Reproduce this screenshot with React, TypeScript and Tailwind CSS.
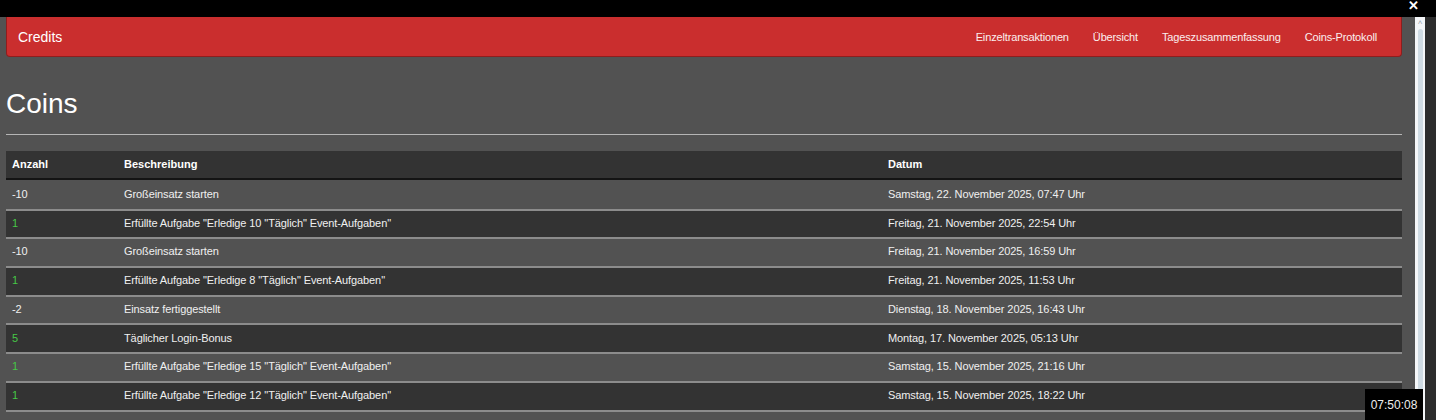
import React from "react";

const rows: { n: string; d: string; t: string }[] = [
  { n: "-10", d: "Großeinsatz starten", t: "Samstag, 22. November 2025, 07:47 Uhr" },
  { n: "1", d: 'Erfüllte Aufgabe "Erledige 10 "Täglich" Event-Aufgaben"', t: "Freitag, 21. November 2025, 22:54 Uhr" },
  { n: "-10", d: "Großeinsatz starten", t: "Freitag, 21. November 2025, 16:59 Uhr" },
  { n: "1", d: 'Erfüllte Aufgabe "Erledige 8 "Täglich" Event-Aufgaben"', t: "Freitag, 21. November 2025, 11:53 Uhr" },
  { n: "-2", d: "Einsatz fertiggestellt", t: "Dienstag, 18. November 2025, 16:43 Uhr" },
  { n: "5", d: "Täglicher Login-Bonus", t: "Montag, 17. November 2025, 05:13 Uhr" },
  { n: "1", d: 'Erfüllte Aufgabe "Erledige 15 "Täglich" Event-Aufgaben"', t: "Samstag, 15. November 2025, 21:16 Uhr" },
  { n: "1", d: 'Erfüllte Aufgabe "Erledige 12 "Täglich" Event-Aufgaben"', t: "Samstag, 15. November 2025, 18:22 Uhr" },
  { n: "1", d: 'Erfüllte Aufgabe "Erledige 10 "Täglich" Event-Aufgaben"', t: "Freitag, 14. November 2025, 17:04 Uhr" },
];

export default function App() {
  return (
    <div
      className="relative w-[1436px] h-[420px] overflow-hidden bg-black text-white"
      style={{ fontFamily: '"Liberation Sans", Arial, sans-serif' }}
    >
      <div className="h-[17px] bg-black flex justify-end pr-[17px]">
        <span className="text-[13px] leading-[11px] font-bold text-white">✕</span>
      </div>
      <div className="flex h-[403px]">
        <div className="w-[1415px] bg-[#525252] pl-[6px] pr-[13px] overflow-hidden">
          <div className="h-[40px] bg-[#ca2e2e] border border-t-0 border-[#8f1d1d] rounded-b-[4px] flex items-center justify-between pl-[11px] pr-[12px] pt-[1px]">
            <span className="text-[14px] text-white">Credits</span>
            <div className="flex text-[11px] tracking-[-0.15px] text-[#fbeeee]">
              <span className="px-[12px]">Einzeltransaktionen</span>
              <span className="px-[12px]">Übersicht</span>
              <span className="px-[12px]">Tageszusammenfassung</span>
              <span className="px-[12px]">Coins-Protokoll</span>
            </div>
          </div>
          <h1 className="mt-[31px] mb-[15px] text-[28px] leading-[31px] text-white">Coins</h1>
          <div className="h-px bg-[#b5b5b5]" />
          <div className="mt-[16px]">
            <div className="flex h-[29px] items-center bg-[#333333] border-b-2 border-[#141414] text-[11px] font-bold text-white">
              <div className="w-[118px] pl-[6px]">Anzahl</div>
              <div className="w-[764px]">Beschreibung</div>
              <div className="flex-1">Datum</div>
            </div>
            {rows.map((r, i) => (
              <div
                key={i}
                className={`flex h-[28.7px] items-center text-[11px] tracking-[-0.1px] text-[#f0f0f0] ${
                  i > 0 ? "border-t-2 border-[#8c8c8c] pb-[2px]" : ""
                } ${i % 2 === 1 ? "bg-[#333333]" : "bg-[#525252]"}`}
              >
                <div
                  className={`w-[118px] pl-[6px] ${
                    r.n.startsWith("-") ? "text-[#f0f0f0]" : "text-[#46c846]"
                  }`}
                >
                  {r.n}
                </div>
                <div className="w-[764px]">{r.d}</div>
                <div className="flex-1">{r.t}</div>
              </div>
            ))}
          </div>
        </div>
        <div className="w-[10px] bg-[#f4f6f8] flex flex-col items-center">
          <span className="text-[8px] leading-[10px] text-[#9aa4ad] mt-[1px]">˄</span>
          <div className="mt-[1px] w-[5px] flex-1 rounded-t-[3px] bg-[#cfdbe3]" />
        </div>
        <div className="flex-1 bg-[#2c2c2c]" />
      </div>
      <div className="absolute left-[1365px] top-[389px] w-[58px] h-[31px] bg-black flex items-center justify-center text-[12px] text-[#eeeeee]">
        07:50:08
      </div>
    </div>
  );
}
